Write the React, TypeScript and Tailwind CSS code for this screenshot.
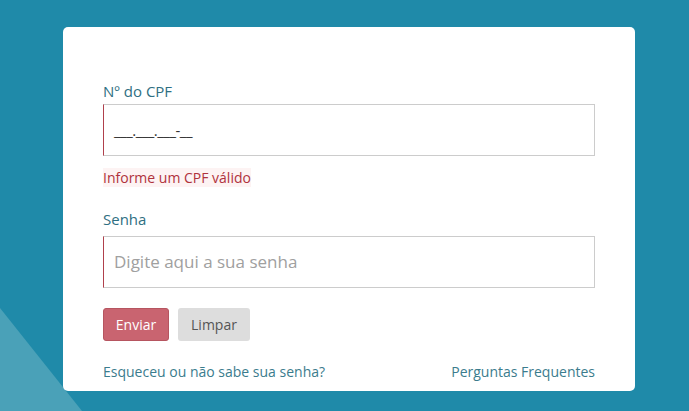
export default function App() {
  return (
    <div className="relative w-[689px] h-[411px] overflow-hidden bg-[#1f8aa9] font-['Open_Sans',sans-serif]">
      {/* decorative light triangle behind the card */}
      <svg className="absolute left-0 top-0" width="689" height="411" viewBox="0 0 689 411">
        <polygon points="0,308 0,411 82,411" fill="#4aa1b8" />
      </svg>

      <div className="relative ml-[63px] mt-[27px] w-[572px] h-[364px] rounded-[5px] bg-white pl-10 pr-10 pt-[54px]">
        <label className="block text-[15px] leading-[20px] text-[#2f6f82]">Nº do CPF</label>
        <div className="mt-[3px] h-[52px] border border-[#cccccc] border-l-[#b0404c] flex items-center pl-[10px]">
          <span className="text-[15px] text-[#333] tracking-[-0.5px]">___.___.___-__</span>
        </div>
        <div className="mt-[9px] h-[20px]">
          <span className="text-[14px] leading-[20px] text-[#b0323c] bg-[#fdf3f3]">Informe um CPF válido</span>
        </div>

        <label className="block mt-[24px] text-[15px] leading-[20px] text-[#2f6f82]">Senha</label>
        <div className="mt-[7px] h-[52px] border border-[#cccccc] border-l-[#b0404c] flex items-center pl-[10px]">
          <span className="text-[17px] text-[#a0a0a0]">Digite aqui a sua senha</span>
        </div>

        <div className="mt-[20px] flex gap-[9px]">
          <button className="h-[33px] w-[66px] rounded-[3px] bg-[#c96470] border border-[#b65560] text-white text-[14px]">
            Enviar
          </button>
          <button className="h-[33px] w-[72px] rounded-[3px] bg-[#dddddd] text-[#555] text-[14px]">
            Limpar
          </button>
        </div>

        <div className="mt-[21px] flex justify-between text-[14px] leading-[20px] text-[#3b7c8d]">
          <span>Esqueceu ou não sabe sua senha?</span>
          <span>Perguntas Frequentes</span>
        </div>
      </div>
    </div>
  )
}
